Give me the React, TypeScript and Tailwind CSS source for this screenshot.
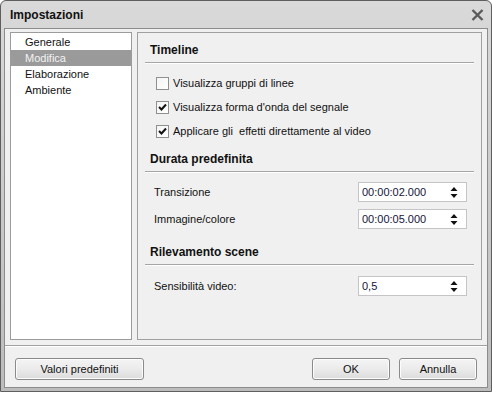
import React, { useState } from 'react';

const font = { fontFamily: '"Liberation Sans", Arial, sans-serif' };

function Check({ checked }: { checked: boolean }) {
  return (
    <span className="w-[13px] h-[13px] border border-[#8e8f8f] bg-gradient-to-br from-[#f4f4f4] to-white flex items-center justify-center shrink-0">
      {checked && (
        <svg width="9" height="8" viewBox="0 0 9 8">
          <path d="M1 4 L3.5 6.5 L8 1.5" stroke="#111" strokeWidth="2" fill="none" />
        </svg>
      )}
    </span>
  );
}

function SpinBox({ value }: { value: string }) {
  return (
    <div className="w-[109px] h-[20px] border border-[#c5c5c5] bg-white flex items-center pl-[3px] pr-[8px]">
      <span className="flex-1 text-[11px] text-[#14143c]">{value}</span>
      <svg width="8" height="13" viewBox="0 0 8 13">
        <path d="M4 1 L7.5 5 L0.5 5 Z" fill="#111" />
        <path d="M0.5 8 L7.5 8 L4 12 Z" fill="#111" />
      </svg>
    </div>
  );
}

function Section({ title }: { title: string }) {
  return (
    <div className="mx-[7px]">
      <div className="h-[16px] leading-[16px] pl-[5px] text-[12px] font-bold text-[#111]">{title}</div>
      <div className="mt-[4px] h-px bg-[#a6a6a6] shadow-[0_1px_0_#ffffff]" />
    </div>
  );
}

function Button({ label, w }: { label: string; w: string }) {
  return (
    <button className={`${w} h-[22px] rounded-[3px] border border-[#8a8a8a] bg-gradient-to-b from-[#f4f4f4] via-[#ebebeb] to-[#dcdcdc] text-[11px] text-[#111] shadow-[inset_0_0_0_1px_#fcfcfc]`}>
      {label}
    </button>
  );
}

export default function App() {
  const [selected, setSelected] = useState('Modifica');
  const items = ['Generale', 'Modifica', 'Elaborazione', 'Ambiente'];

  return (
    <div className="w-[492px] h-[395px] bg-white" style={font}>
      <div className="w-[492px] h-[392px] rounded-t-[6px] border border-[#5e5e5e] bg-gradient-to-b from-[#d9d9d9] to-[#bcbcbc] flex flex-col px-[3px] pb-[3px]">
        {/* title bar */}
        <div className="h-[27px] flex items-center justify-between pl-[6px] pr-[4px]">
          <span className="text-[12px] font-bold text-[#111]">Impostazioni</span>
          <svg width="13" height="12" viewBox="0 0 13 12">
            <path d="M1.5 1 L11.5 11 M11.5 1 L1.5 11" stroke="#5a5a5a" strokeWidth="2.4" />
          </svg>
        </div>

        {/* client area */}
        <div className="flex-1 border border-[#8c8c8c] bg-[#f0f0f0] flex flex-col">
          <div className="flex gap-[5px] pt-[3px] px-[5px]">
            <div className="w-[122px] h-[308px] border border-[#9c9c9c] bg-white pt-[1px] flex flex-col">
              {items.map((it) => (
                <div
                  key={it}
                  onClick={() => setSelected(it)}
                  className={`h-[16px] leading-[16px] pl-[14px] text-[11px] ${
                    selected === it ? 'bg-[#9a9a9a] text-[#f2f2f2]' : 'text-[#111]'
                  }`}
                >
                  {it}
                </div>
              ))}
            </div>

            <div className="flex-1 h-[308px] border border-[#a0a0a0] bg-[#f0f0f0] pt-[9px] flex flex-col text-[11px] text-[#111]">
              <Section title="Timeline" />
              <div className="mt-[8px] flex flex-col pl-[18px]">
                {[
                  ['Visualizza gruppi di linee', false],
                  ["Visualizza forma d'onda del segnale", true],
                  ['Applicare gli  effetti direttamente al video', true],
                ].map(([l, c]) => (
                  <div key={l as string} className="h-[24px] flex items-center gap-[4px]">
                    <Check checked={c as boolean} />
                    <span className="whitespace-pre">{l as string}</span>
                  </div>
                ))}
              </div>

              <div className="mt-[8px]">
                <Section title="Durata predefinita" />
              </div>
              <div className="mt-[10px] flex flex-col gap-[7px] pl-[16px] pr-[14px]">
                <div className="flex items-center justify-between">
                  <span>Transizione</span>
                  <SpinBox value="00:00:02.000" />
                </div>
                <div className="flex items-center justify-between">
                  <span>Immagine/colore</span>
                  <SpinBox value="00:00:05.000" />
                </div>
              </div>

              <div className="mt-[15px]">
                <Section title="Rilevamento scene" />
              </div>
              <div className="mt-[11px] flex items-center justify-between pl-[16px] pr-[14px]">
                <span>Sensibilità video:</span>
                <SpinBox value="0,5" />
              </div>
            </div>
          </div>

          <div className="mt-[5px] h-px bg-[#a0a0a0] shadow-[0_1px_0_#ffffff]" />

          <div className="flex items-center pt-[12px] px-[10px]">
            <Button label="Valori predefiniti" w="w-[129px]" />
            <div className="flex-1" />
            <Button label="OK" w="w-[78px]" />
            <div className="w-[9px]" />
            <Button label="Annulla" w="w-[78px]" />
          </div>
        </div>
      </div>
    </div>
  );
}
